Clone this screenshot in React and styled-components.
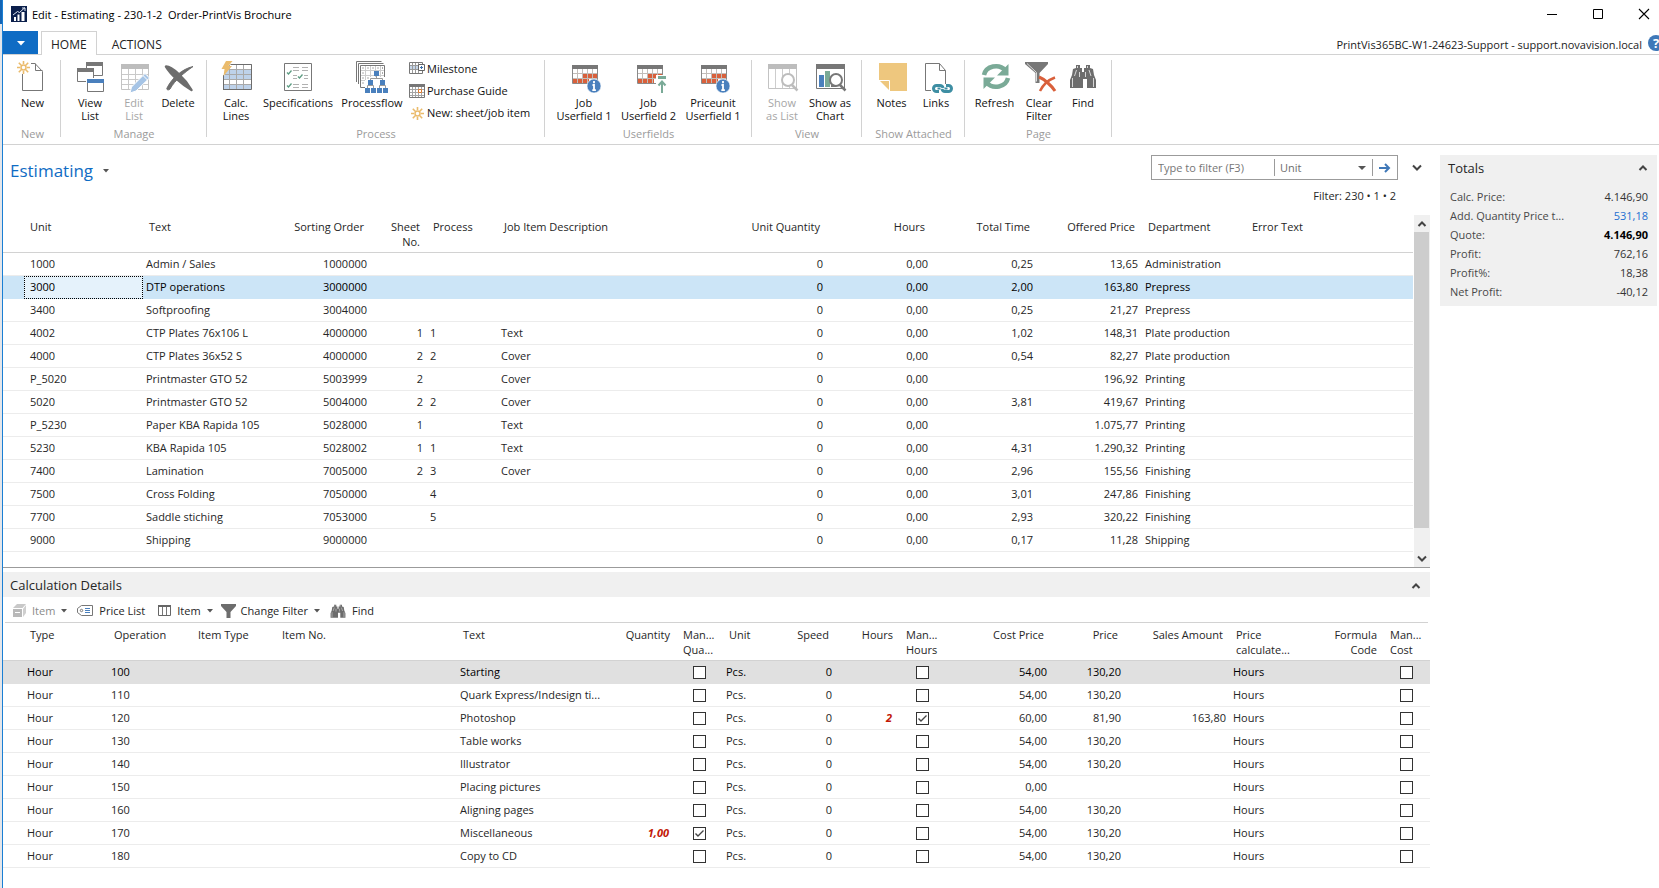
import React from 'react'
import styled, { createGlobalStyle } from 'styled-components'

const UNITS = [
  ['1000', 'Admin / Sales', '1000000', '', '', '', '0', '0,00', '0,25', '13,65', 'Administration', ''],
  ['3000', 'DTP operations', '3000000', '', '', '', '0', '0,00', '2,00', '163,80', 'Prepress', ''],
  ['3400', 'Softproofing', '3004000', '', '', '', '0', '0,00', '0,25', '21,27', 'Prepress', ''],
  ['4002', 'CTP Plates 76x106 L', '4000000', '1', '1', 'Text', '0', '0,00', '1,02', '148,31', 'Plate production', ''],
  ['4000', 'CTP Plates 36x52 S', '4000000', '2', '2', 'Cover', '0', '0,00', '0,54', '82,27', 'Plate production', ''],
  ['P_5020', 'Printmaster GTO 52', '5003999', '2', '', 'Cover', '0', '0,00', '', '196,92', 'Printing', ''],
  ['5020', 'Printmaster GTO 52', '5004000', '2', '2', 'Cover', '0', '0,00', '3,81', '419,67', 'Printing', ''],
  ['P_5230', 'Paper KBA Rapida 105', '5028000', '1', '', 'Text', '0', '0,00', '', '1.075,77', 'Printing', ''],
  ['5230', 'KBA Rapida 105', '5028002', '1', '1', 'Text', '0', '0,00', '4,31', '1.290,32', 'Printing', ''],
  ['7400', 'Lamination', '7005000', '2', '3', 'Cover', '0', '0,00', '2,96', '155,56', 'Finishing', ''],
  ['7500', 'Cross Folding', '7050000', '', '4', '', '0', '0,00', '3,01', '247,86', 'Finishing', ''],
  ['7700', 'Saddle stiching', '7053000', '', '5', '', '0', '0,00', '2,93', '320,22', 'Finishing', ''],
  ['9000', 'Shipping', '9000000', '', '', '', '0', '0,00', '0,17', '11,28', 'Shipping', ''],
]

const UNIT_COLUMNS = [
  { label: ['Unit'], width: 119 },
  { label: ['Text'], width: 123 },
  { label: ['Sorting Order'], width: 105, right: true },
  { label: ['Sheet', 'No.'], width: 56, right: true },
  { label: ['Process'], width: 71 },
  { label: ['Job Item Description'], width: 224 },
  { label: ['Unit Quantity'], width: 105, right: true },
  { label: ['Hours'], width: 105, right: true },
  { label: ['Total Time'], width: 105, right: true },
  { label: ['Offered Price'], width: 105, right: true },
  { label: ['Department'], width: 104 },
  { label: ['Error Text'] },
]

const DETAIL_COLUMNS = [
  { key: 'type', label: ['Type'], width: 84 },
  { key: 'operation', label: ['Operation'], width: 84 },
  { key: 'itemType', label: ['Item Type'], width: 84 },
  { key: 'itemNo', label: ['Item No.'], width: 181 },
  { key: 'text', label: ['Text'], width: 150 },
  { key: 'quantity', label: ['Quantity'], width: 70, right: true, manual: true },
  { key: 'manualQuantity', label: ['Man...', 'Qua...'], width: 46, check: true },
  { key: 'unit', label: ['Unit'], width: 49 },
  { key: 'speed', label: ['Speed'], width: 64, right: true },
  { key: 'hours', label: ['Hours'], width: 64, right: true, manual: true },
  { key: 'manualHours', label: ['Man...', 'Hours'], width: 46, check: true },
  { key: 'cost', label: ['Cost Price'], width: 105, right: true },
  { key: 'price', label: ['Price'], width: 74, right: true },
  { key: 'sales', label: ['Sales Amount'], width: 105, right: true },
  { key: 'method', label: ['Price', 'calculate...'], width: 84 },
  { key: 'formula', label: ['Formula', 'Code'], width: 70, right: true },
  { key: 'manualCost', label: ['Man...', 'Cost'], check: true },
]

const DETAILS = [
  { operation: '100', text: 'Starting', cost: '54,00', price: '130,20' },
  { operation: '110', text: 'Quark Express/Indesign ti...', cost: '54,00', price: '130,20' },
  { operation: '120', text: 'Photoshop', cost: '60,00', price: '81,90', sales: '163,80', hours: '2', manualHours: true },
  { operation: '130', text: 'Table works', cost: '54,00', price: '130,20' },
  { operation: '140', text: 'Illustrator', cost: '54,00', price: '130,20' },
  { operation: '150', text: 'Placing pictures', cost: '0,00' },
  { operation: '160', text: 'Aligning pages', cost: '54,00', price: '130,20' },
  { operation: '170', text: 'Miscellaneous', cost: '54,00', price: '130,20', quantity: '1,00', manualQuantity: true },
  { operation: '180', text: 'Copy to CD', cost: '54,00', price: '130,20' },
].map(row => ({ type: 'Hour', unit: 'Pcs.', speed: '0', method: 'Hours', ...row }))

const TOTALS = [
  { label: 'Calc. Price:', value: '4.146,90' },
  { label: 'Add. Quantity Price t...', value: '531,18', kind: 'link' },
  { label: 'Quote:', value: '4.146,90', kind: 'strong' },
  { label: 'Profit:', value: '762,16' },
  { label: 'Profit%:', value: '18,38' },
  { label: 'Net Profit:', value: '-40,12' },
]

/* icons */

const Icon = ({ size = 32, children }) => (
  <IconSvg width={size} height={size} viewBox={`0 0 ${size} ${size}`} fill="none" aria-hidden="true">
    {children}
  </IconSvg>
)

const Sun = ({ x = 0, y = 0 }) => (
  <g transform={`translate(${x} ${y})`} stroke="#eabb6c" strokeWidth="2">
    <circle cx="6.5" cy="6.5" r="2.5" strokeWidth="1.5" />
    <path d="M6.5 0v3M6.5 10v3M0 6.5h3M10 6.5h3M1.8 1.8l2.4 2.4M8.8 8.8l2.4 2.4M11.2 1.8L8.8 4.2M4.2 8.8l-2.4 2.4" strokeWidth="1.6" />
  </g>
)

const NewIcon = () => (
  <Icon>
    <path d="M5.500 14v16.500h20V11.500l-7.500-8h-4" stroke="#777" fill="#fff" />
    <path d="M18.500 3.500v7h7" stroke="#777" />
    <Sun x={0} y={1} />
  </Icon>
)

const ViewListIcon = () => (
  <Icon>
    <path d="M12.500 2.500h16v13h-16z" fill="#fff" stroke="#777" />
    <path d="M12 2h17v4H12z" fill="#777" />
    <path d="M3.500 8.500h16v13h-16z" fill="#fff" stroke="#777" />
    <path d="M3 8h17v4H3z" fill="#777" />
    <path d="M12.500 18.500h17v14h-17z" fill="#fff" stroke="#fff" />
    <path d="M13.500 19.500h16v12h-16z" fill="#fff" stroke="#777" />
    <path d="M13 19h17v4H13z" fill="#4a80bd" />
  </Icon>
)

const EditListIcon = () => (
  <Icon>
    <path d="M3.500 4.500h27v25h-27z" fill="#fff" stroke="#c3c3c3" />
    <path d="M3 4h28v5H3z" fill="#bdbdbd" />
    <path d="M10.500 9v20M17.500 9v20M24.500 9v20M4 14.500h26M4 19.500h26M4 24.500h26" stroke="#c9c9c9" />
    <path d="M12 33l1.500-6L27 13.500l4.500 4.500L18 31z" fill="#a6c4e5" stroke="#fff" />
    <path d="M25 15.500l4.500 4.500" stroke="#fff" />
  </Icon>
)

const DeleteIcon = () => (
  <Icon>
    <path d="M4 6.500C10 7 22 17 29.500 30 21 25 9 15 4 6.500z" fill="#6d6d6d" stroke="#6d6d6d" strokeWidth="2.500" strokeLinejoin="round" />
    <path d="M5 28C10 18 20 9 31 6.500 22 13 13 20 8 29c-1 1.500-4 1-3-1z" fill="#6d6d6d" stroke="#6d6d6d" strokeWidth="1" />
  </Icon>
)

const CalcLinesIcon = () => (
  <Icon>
    <path d="M3.500 4.500h28v25h-28z" fill="#fff" stroke="#6d6d6d" />
    <path d="M4 10h27v9H4zM4 24h27v5H4z" fill="#bed2ea" />
    <path d="M9.500 5v24M16.500 5v24M23.500 5v24M4 9.500h27M4 14.500h27M4 19.500h27M4 24.500h27" stroke="#a9a9a9" />
    <path d="M3 0h10v5H9l-5 11H0V0z" fill="#fff" />
    <path d="M10.500 4.500h21M3.500 15v15" stroke="#6d6d6d" />
    <path d="M6 1h6.500L8.500 6H12L3.500 16l1-7H1.500z" fill="#eabb6c" />
  </Icon>
)

const SpecificationsIcon = () => (
  <Icon>
    <path d="M2.500 3.500h27v27h-27z" fill="#fff" stroke="#777" />
    <path d="M11 7.500h6M11 10.500h6M20 7.500h6M20 10.500h6M11 15.500h4M11 18.500h4M22 15.500h4M22 18.500h4M11 24.500h6M11 27.500h6M20 24.500h6M20 27.500h6" stroke="#b1b1b1" />
    <path d="M5 12.500l1.500 1.500 3-3.500M16 16.500l1.500 1.500 3-3.500M5 25.500l1.500 1.500 3-3.500" stroke="#5c9c82" strokeWidth="1.300" />
  </Icon>
)

const ProcessflowIcon = () => (
  <Icon>
    <path d="M.5 22V1.500h25M2.500 24V3.500h25" stroke="#777" />
    <path d="M4.500 5.500h24v22h-24z" fill="#fff" stroke="#777" />
    <path d="M9.500 6v21M14.500 6v21M19.500 6v21M24.500 6v21M5 10.500h23M5 15.500h23M5 20.500h23" stroke="#cdcdcd" />
    <path d="M6.500 8h1M11.500 8h1M16.500 8h1M21.500 8h1M26 8h1M6.500 13h1M6.500 18h1M11.500 18h1M6.500 23h1M26 13h1" stroke="#555" />
    <path d="M13 17h16v3h3v13H9V20h4z" fill="#fff" />
    <path d="M20.500 15v3.500M14.500 21v-2.500h12V21M11.500 28v-2.500h6V28M23.500 28v-2.500h6V28M14.500 24v2M26.500 24v2" stroke="#9a9a9a" />
    <path d="M18 11h5v5h-5zM12 20h5v5h-5zM24 20h5v5h-5zM9 28h5v5H9zM15 28h5v5h-5zM21 28h5v5h-5zM27 28h5v5h-5z" fill="#4a80bd" />
  </Icon>
)

const MilestoneIcon = () => (
  <Icon size={16}>
    <path d="M.5 1.500h13v11H.5z" fill="#fff" stroke="#777" />
    <path d="M1 5h9v4H1z" fill="#c5d5e8" />
    <path d="M3.500 2v10M6.500 2v10M9.500 2v10M1 4.500h12M1 8.500h12" stroke="#9a9a9a" />
    <path d="M9.500 3.500h6v6h-6z" fill="#fff" stroke="#666" />
    <path d="M11 6.500h3M12.500 5v3" stroke="#3a6ea8" />
  </Icon>
)

const PurchaseIcon = () => (
  <Icon size={16}>
    <path d="M.5 1.500h15v13H.5z" fill="#fff" stroke="#777" />
    <path d="M3.500 4v10M6.500 4v10M9.500 4v10M12.500 4v10M1 6.500h14M1 9.500h14M1 12.500h14" stroke="#a5a5a5" />
    <path d="M0 1h16v3H0z" fill="#777" />
    <path d="M9.500 6.500h3v3h-3z" fill="#fff" stroke="#e07b2e" />
  </Icon>
)

const SunIcon = () => (
  <Icon size={16}>
    <Sun x={2} y={2} />
  </Icon>
)

const UserfieldIcon = ({ arrow }) => (
  <Icon>
    <path d="M4.500 5.500h25v18h-25z" fill="#fff" stroke="#8a8a8a" />
    <path d="M15 14h14v4.500H15zM5 18.500h16V23H5z" fill="#d9603b" />
    <path d="M9.500 9v14M14.500 9v14M19.500 9v14M24.500 9v14M5 13.500h24M5 18.500h24" stroke="#c2bdb9" />
    <path d="M4 5h26v4H4z" fill="#777" />
    {arrow ? (
      <g>
        <path d="M23 15h11v18H23z" fill="#fff" />
        <path d="M25 16h8v3h-8z" fill="#7aaa97" />
        <path d="M29 33V22M25.500 25.500l3.500-4 3.500 4" stroke="#7aaa97" strokeWidth="2" />
      </g>
    ) : (
      <g>
        <circle cx="26" cy="26" r="7" fill="#4a80bd" stroke="#fff" strokeWidth=".6" />
        <path d="M26 21v2.200M24.500 25H26v5M24.300 30.200h3.600" stroke="#fff" strokeWidth="1.800" />
      </g>
    )}
  </Icon>
)

const Magnifier = ({ color }) => (
  <g>
    <circle cx="22" cy="20" r="6" fill="#fff" stroke={color} strokeWidth="2" />
    <path d="M26 25l5.500 5.500" stroke={color} strokeWidth="2.500" />
  </g>
)

const ShowListIcon = () => (
  <Icon>
    <path d="M2.500 4.500h28v24h-28z" fill="#fff" stroke="#c3c3c3" />
    <path d="M2 4h29v5H2z" fill="#bdbdbd" />
    <path d="M9.500 9v19M16.500 9v19M23.500 9v19" stroke="#cdcdcd" />
    <Magnifier color="#bdbdbd" />
  </Icon>
)

const ShowChartIcon = () => (
  <Icon>
    <path d="M2.500 4.500h28v24h-28z" fill="#fff" stroke="#777" />
    <path d="M2 4h29v5H2z" fill="#777" />
    <path d="M5 15h5v12H5z" fill="#4a80bd" />
    <path d="M11 11h5v16h-5z" fill="#7aaa97" />
    <path d="M17 18h5v9h-5z" fill="#777" />
    <Magnifier color="#777" />
  </Icon>
)

const NotesIcon = () => (
  <Icon>
    <path d="M3 3h28v28H14L3 20z" fill="#eec77e" />
    <path d="M3 20.500h10.500V31" stroke="#fff" />
  </Icon>
)

const LinksIcon = () => (
  <Icon>
    <path d="M5.500 3.500h14l6 7v20h-20z" fill="#fff" stroke="#777" />
    <path d="M19.500 3.500v7h6" stroke="#777" />
    <path d="M11 24h22v10H11z" fill="#fff" />
    <g stroke="#3e8ea3" strokeWidth="3">
      <path d="M19 31.500h-2.500a3 3 0 0 1 0-6H20q2.500 0 3 2.500" />
      <path d="M26 25.500h2.500a3 3 0 0 1 0 6H25q-2.500 0-3-2.500" />
      <path d="M17.500 28.500h3M24.500 28.500h3" strokeWidth="2" />
    </g>
  </Icon>
)

const RefreshIcon = () => (
  <Icon>
    <path d="M5 15C7 6 20 3 26.500 10.500" stroke="#7aaa97" strokeWidth="4.500" />
    <path d="M29.500 4v11.500H18z" fill="#7aaa97" />
    <path d="M29 18C27 27 14 30 7.500 22.500" stroke="#7aaa97" strokeWidth="4.500" />
    <path d="M4.500 29V17.500H16z" fill="#7aaa97" />
  </Icon>
)

const ClearFilterIcon = () => (
  <Icon>
    <path d="M2 2h23v2l-8.500 9v10h-4V13L2 4z" fill="#777" />
    <path d="M4 3.500l9.500 9v9" stroke="#ddd" />
    <path d="M16 17c5 2 12 8 16 14" stroke="#d9603b" strokeWidth="3" />
    <path d="M17 31c3-6 8-11 15-13.500" stroke="#d9603b" strokeWidth="2.500" />
  </Icon>
)

const Binoculars = () => (
  <g>
    <path d="M9 5h4v3h2v4h2V8h2V5h4v3l3 1 1 6 2 5v8h-9v-9h-4v9H3v-8l2-5 1-6 3-1z" fill="#6d6d6d" />
    <path d="M10.500 6v2M20.500 6v2M5.500 18v9M26.500 18v9M9.500 10L7.500 16M22 10l2 6M12.500 12v5M18.500 12v5" stroke="#d6d6d6" />
  </g>
)

const FindIcon = () => (
  <Icon>
    <Binoculars />
  </Icon>
)

const SmallFindIcon = () => (
  <IconSvg width="16" height="16" viewBox="2 2 28 28" aria-hidden="true">
    <Binoculars />
  </IconSvg>
)

const BoxIcon = () => (
  <Icon size={16}>
    <path d="M1 5l4-4h9l-3.500 4z" fill="#c8c8c8" />
    <path d="M1 6h9v8H1z" fill="#b9b9b9" />
    <path d="M11 6l3-4v8l-3 4z" fill="#cfcfcf" />
    <path d="M3 9.500h5" stroke="#fff" />
  </Icon>
)

const TagIcon = () => (
  <Icon size={16}>
    <path d="M4.500 2.500h11v10h-11L.5 9.500v-4z" fill="#fff" stroke="#777" />
    <circle cx="4.500" cy="7.500" r="1.200" stroke="#777" />
    <path d="M8 5.500h5M8 7.500h5M8 9.500h5" stroke="#4a80bd" />
  </Icon>
)

const ColumnsIcon = () => (
  <Icon size={16}>
    <path d="M1.500 2.500h12v10h-12z" fill="#fff" stroke="#666" />
    <path d="M5.500 3v9M9.500 3v9" stroke="#777" />
    <path d="M1 2h13v2H1z" fill="#666" />
  </Icon>
)

const FunnelIcon = () => (
  <Icon size={16}>
    <path d="M0 1h15v2L9.500 9v6h-4V9L0 3z" fill="#6d6d6d" />
  </Icon>
)

const Chevron = ({ up }) => (
  <IconSvg width="10" height="8" viewBox="0 0 10 8" fill="none" aria-hidden="true">
    <path d={up ? 'M1.500 6L5 2.500 8.500 6' : 'M1 1.500L5 5.500 9 1.500'} stroke="#444" strokeWidth="2" />
  </IconSvg>
)

const Caret = () => (
  <IconSvg width="6" height="4" viewBox="0 0 6 4" aria-hidden="true">
    <path d="M0 0h6L3 3.500z" fill="#555" />
  </IconSvg>
)

const AppLogo = () => (
  <Icon size={16}>
    <path d="M0 0h16v16H0z" fill="#0b1f4b" />
    <path d="M3 11h2v4H3zM6.500 8.500h2V15h-2zM10.500 6h3v9h-3z" fill="#fff" />
    <path d="M2 9l4.500-3.500 2 1L14 1.500M11 2h3v3" stroke="#dfe6f2" />
  </Icon>
)

/* ribbon */

const RibbonButton = ({ icon, lines, width, disabled }) => (
  <BigButton type="button" $width={width} disabled={disabled}>
    {icon}
    <span>
      {lines.map(line => (
        <Line key={line}>{line}</Line>
      ))}
    </span>
  </BigButton>
)

const RibbonGroup = ({ title, children }) => (
  <Group aria-label={title}>
    <GroupButtons>{children}</GroupButtons>
    <GroupTitle>{title}</GroupTitle>
  </Group>
)

const Ribbon = () => (
  <RibbonBar>
    <RibbonGroup title="New">
      <RibbonButton icon={<NewIcon />} lines={['New']} width={45} />
    </RibbonGroup>
    <RibbonGroup title="Manage">
      <RibbonButton icon={<ViewListIcon />} lines={['View', 'List']} />
      <RibbonButton icon={<EditListIcon />} lines={['Edit', 'List']} disabled />
      <RibbonButton icon={<DeleteIcon />} lines={['Delete']} />
    </RibbonGroup>
    <RibbonGroup title="Process">
      <RibbonButton icon={<CalcLinesIcon />} lines={['Calc.', 'Lines']} />
      <RibbonButton icon={<SpecificationsIcon />} lines={['Specifications']} width={80} />
      <RibbonButton icon={<ProcessflowIcon />} lines={['Processflow']} width={68} />
      <SmallButtons>
        <SmallButton type="button"><MilestoneIcon />Milestone</SmallButton>
        <SmallButton type="button"><PurchaseIcon />Purchase Guide</SmallButton>
        <SmallButton type="button"><SunIcon />New: sheet/job item</SmallButton>
      </SmallButtons>
    </RibbonGroup>
    <RibbonGroup title="Userfields">
      <RibbonButton icon={<UserfieldIcon />} lines={['Job', 'Userfield 1']} width={64} />
      <RibbonButton icon={<UserfieldIcon arrow />} lines={['Job', 'Userfield 2']} width={65} />
      <RibbonButton icon={<UserfieldIcon />} lines={['Priceunit', 'Userfield 1']} width={64} />
    </RibbonGroup>
    <RibbonGroup title="View">
      <RibbonButton icon={<ShowListIcon />} lines={['Show', 'as List']} width={46} disabled />
      <RibbonButton icon={<ShowChartIcon />} lines={['Show as', 'Chart']} width={50} />
    </RibbonGroup>
    <RibbonGroup title="Show Attached">
      <RibbonButton icon={<NotesIcon />} lines={['Notes']} width={45} />
      <RibbonButton icon={<LinksIcon />} lines={['Links']} />
    </RibbonGroup>
    <RibbonGroup title="Page">
      <RibbonButton icon={<RefreshIcon />} lines={['Refresh']} width={45} />
      <RibbonButton icon={<ClearFilterIcon />} lines={['Clear', 'Filter']} />
      <RibbonButton icon={<FindIcon />} lines={['Find']} />
    </RibbonGroup>
  </RibbonBar>
)

/* tables */

const TableHead = ({ columns }) => (
  <>
    <colgroup>
      <col width="21" />
      {columns.map((column, i) => (
        <col key={i} width={column.width} />
      ))}
    </colgroup>
    <thead>
      <tr>
        <HeadCell />
        {columns.map((column, i) => (
          <HeadCell key={i} $right={column.right}>
            {column.label.map(line => (
              <Line key={line}>{line}</Line>
            ))}
          </HeadCell>
        ))}
      </tr>
    </thead>
  </>
)

const Tick = ({ label, checked }) => (
  <TickLabel>
    <TickInput type="checkbox" aria-label={label} defaultChecked={checked} />
    <TickMark viewBox="0 0 13 13" fill="none" aria-hidden="true">
      <path d="M2.500 6.500L5 9l5.500-5.500" stroke="#444" strokeWidth="1.400" />
    </TickMark>
  </TickLabel>
)

const UnitTable = () => (
  <GridTable>
    <TableHead columns={UNIT_COLUMNS} />
    <tbody>
      {UNITS.map((row, r) => (
        <Row key={r} $tone={r === 1 ? 'active' : null}>
          <Cell />
          {row.map((value, c) => (
            <Cell key={c} $right={UNIT_COLUMNS[c].right} $first={c === 0} $focused={r === 1 && c === 0}>
              {value}
            </Cell>
          ))}
        </Row>
      ))}
    </tbody>
  </GridTable>
)

const DetailTable = () => (
  <GridTable>
    <TableHead columns={DETAIL_COLUMNS} />
    <tbody>
      {DETAILS.map((row, r) => (
        <Row key={row.operation} $tone={r === 0 ? 'muted' : null}>
          <Cell />
          {DETAIL_COLUMNS.map(({ key, right, check, manual }) => (
            <Cell key={key} $right={right} $center={check} $manual={manual}>
              {check ? <Tick label={`${key} ${row.operation}`} checked={row[key]} /> : row[key]}
            </Cell>
          ))}
        </Row>
      ))}
    </tbody>
  </GridTable>
)

const App = () => (
  <Desktop>
    <GlobalStyle />
    <Window>
      <TitleBar>
        <AppLogo />
        <WindowTitle>{'Edit - Estimating - 230-1-2  Order-PrintVis Brochure'}</WindowTitle>
        <WindowButton type="button" aria-label="Minimize">
          <Icon size={12}><path d="M1 6.500h10" stroke="#000" /></Icon>
        </WindowButton>
        <WindowButton type="button" aria-label="Maximize">
          <Icon size={12}><path d="M1.500 1.500h9v9h-9z" stroke="#000" /></Icon>
        </WindowButton>
        <WindowButton type="button" aria-label="Close">
          <Icon size={12}><path d="M1 1l10 10M11 1L1 11" stroke="#000" strokeWidth="1.100" /></Icon>
        </WindowButton>
      </TitleBar>

      <TabBar>
        <FileButton type="button" aria-label="Application menu">
          <Icon size={8}><path d="M0 2h8L4 6.500z" fill="#fff" /></Icon>
        </FileButton>
        <Tab type="button" $active>HOME</Tab>
        <Tab type="button">ACTIONS</Tab>
        <Server>PrintVis365BC-W1-24623-Support - support.novavision.local</Server>
        <Help type="button" aria-label="Help">?</Help>
      </TabBar>

      <Ribbon />

      <Content>
        <Main>
          <PageHeader>
            <PageTitle type="button">
              Estimating
              <Caret />
            </PageTitle>
            <FilterBox>
              <FilterInput aria-label="Type to filter" placeholder="Type to filter (F3)" />
              <FilterField>
                <FilterSelect aria-label="Filter field" defaultValue="Unit">
                  <option>Unit</option>
                </FilterSelect>
                <Icon size={8}><path d="M0 2h8L4 6z" fill="#555" /></Icon>
              </FilterField>
              <FilterGo type="button" aria-label="Apply filter">
                <Icon size={12}>
                  <path d="M0 6h10M6 2l4 4-4 4" stroke="#3f78b8" strokeWidth="2" />
                </Icon>
              </FilterGo>
            </FilterBox>
            <PlainButton type="button" aria-label="Expand filter pane"><Chevron /></PlainButton>
          </PageHeader>
          <FilterText>Filter: 230 • 1 • 2</FilterText>

          <Lines>
            <UnitTable />
            <ScrollBar>
              <ScrollButton type="button" aria-label="Scroll up"><Chevron up /></ScrollButton>
              <ScrollThumb />
              <ScrollButton type="button" aria-label="Scroll down"><Chevron /></ScrollButton>
            </ScrollBar>
          </Lines>

          <PartHeader>
            <PartTitle>Calculation Details</PartTitle>
            <PlainButton type="button" aria-label="Collapse details"><Chevron up /></PlainButton>
          </PartHeader>
          <PartToolbar>
            <ToolButton type="button" disabled><BoxIcon />Item<Caret /></ToolButton>
            <ToolButton type="button" $plain><TagIcon />Price List</ToolButton>
            <ToolButton type="button"><ColumnsIcon />Item<Caret /></ToolButton>
            <ToolButton type="button"><FunnelIcon />Change Filter<Caret /></ToolButton>
            <ToolButton type="button" $plain><SmallFindIcon />Find</ToolButton>
          </PartToolbar>
          <DetailTable />
        </Main>

        <FactBox>
          <FactHeader>
            <PartTitle>Totals</PartTitle>
            <PlainButton type="button" aria-label="Collapse totals"><Chevron up /></PlainButton>
          </FactHeader>
          {TOTALS.map(({ label, value, kind }) => (
            <Fact key={label}>
              <span>{label}</span>
              {kind === 'link' ? <FactLink href="#">{value}</FactLink> : <FactValue $strong={kind === 'strong'}>{value}</FactValue>}
            </Fact>
          ))}
        </FactBox>
      </Content>
    </Window>
  </Desktop>
)

const GlobalStyle = createGlobalStyle`
  * {
    box-sizing: border-box;
  }

  body {
    margin: 0;
    overflow: hidden;
    background-color: #fff;
    color: #262626;
    font-family: 'Segoe UI', 'Open Sans', 'Noto Sans', sans-serif;
    font-size: 11px;
    line-height: 15px;
  }

  button, input, select {
    margin: 0;
    padding: 0;
    border: 0;
    background: none;
    color: inherit;
    font: inherit;
  }
`

const Desktop = styled.div`
  min-height: 100vh;
  padding-left: 2px;
  background: linear-gradient(#1464b4 24px, #e4e6ea 24px);
`

const Window = styled.div`
  min-height: 100vh;
  border-left: 1px solid #1a7fd4;
  background-color: #fff;
  overflow: hidden;
`

const IconSvg = styled.svg`
  display: block;
  flex: none;
  overflow: visible;
`

const Line = styled.span`
  display: block;
`

const TitleBar = styled.header`
  display: flex;
  align-items: center;
  height: 31px;
  margin-right: -8px;
  padding: 0 0 3px 8px;
`

const WindowTitle = styled.h1`
  flex: 1;
  margin: 0 0 0 5px;
  color: #000;
  font-size: 11px;
  font-weight: normal;
  white-space: pre;
`

const WindowButton = styled.button`
  display: flex;
  justify-content: center;
  width: 46px;
`

const TabBar = styled.nav`
  display: flex;
  align-items: stretch;
  height: 24px;
  margin-right: -5px;
  border-bottom: 1px solid #d2d2d2;
  color: #222;
`

const FileButton = styled.button`
  display: flex;
  align-items: center;
  justify-content: center;
  width: 35px;
  margin-right: 3px;
  background-color: #0f6cc4;
`

const Tab = styled.button`
  margin-bottom: -1px;
  padding: 2px ${({ $active }) => ($active ? 9 : 14)}px 0;
  border: 1px solid ${({ $active }) => ($active ? '#d2d2d2' : 'transparent')};
  border-bottom: 0;
  background-color: ${({ $active }) => ($active ? '#fff' : 'transparent')};
  font-size: 12px;
`

const Server = styled.span`
  margin-left: auto;
  padding: 6px 6px 0 0;
`

const Help = styled.button`
  width: 16px;
  height: 16px;
  margin-top: 4px;
  border-radius: 50%;
  background-color: #3f78b8;
  color: #fff;
  font-size: 13px;
  font-weight: bold;
`

const RibbonBar = styled.div`
  display: flex;
  height: 90px;
  padding: 5px 0 7px;
  border-bottom: 1px solid #d2d2d2;
`

const Group = styled.section`
  display: flex;
  flex-direction: column;
  justify-content: space-between;
  padding: 0 6px 0 7px;
  border-right: 1px solid #d2d2d2;

  &:first-child {
    padding-right: 5px;
  }
`

const GroupButtons = styled.div`
  display: flex;
  align-items: flex-start;
`

const GroupTitle = styled.div`
  margin-bottom: -3px;
  color: #9b9b9b;
  line-height: 13px;
  text-align: center;
  white-space: nowrap;
`

const BigButton = styled.button`
  display: flex;
  flex-direction: column;
  align-items: center;
  gap: 4px;
  width: ${({ $width }) => $width || 44}px;
  color: ${({ disabled }) => (disabled ? '#a6a6a6' : '#111')};
  line-height: 13px;
  white-space: nowrap;
`

const SmallButtons = styled.div`
  display: flex;
  flex-direction: column;
  width: 132px;
  padding-left: 3px;
`

const SmallButton = styled.button`
  display: flex;
  align-items: center;
  gap: 2px;
  height: 22px;
  padding-bottom: 5px;
  color: #111;
  white-space: nowrap;
`

const Content = styled.main`
  display: flex;
  align-items: flex-start;
  gap: 10px;
  padding: 10px 2px 0 0;
`

const Main = styled.div`
  flex: 1;
  min-width: 0;
`

const PageHeader = styled.div`
  display: flex;
  align-items: center;
  gap: 13px;
  height: 25px;
  padding-right: 7px;
`

const PageTitle = styled.button`
  display: flex;
  align-items: center;
  gap: 10px;
  margin-right: auto;
  padding: 6px 0 0 7px;
  color: #0f6cc4;
  font-size: 17px;
  line-height: 21px;
`

const FilterBox = styled.div`
  display: flex;
  align-items: center;
  width: 247px;
  height: 25px;
  border: 1px solid #9b9b9b;
  color: #6d6d6d;
`

const FilterInput = styled.input`
  flex: 1;
  min-width: 0;
  height: 17px;
  padding-left: 6px;
  outline: none;

  &::placeholder {
    color: #767676;
    opacity: 1;
  }
`

const FilterField = styled.div`
  display: flex;
  align-items: center;
  width: 99px;
  height: 17px;
  padding: 0 6px 0 5px;
  border: solid #9b9b9b;
  border-width: 0 1px;
`

const FilterSelect = styled.select`
  flex: 1;
  appearance: none;
  outline: none;
`

const FilterGo = styled.button`
  display: flex;
  justify-content: center;
  width: 24px;
`

const PlainButton = styled.button`
  display: flex;
  align-items: center;
  justify-content: center;
  width: 12px;
  height: 16px;
`

const FilterText = styled.div`
  padding: 8px 34px 0 0;
  text-align: right;
`

const Lines = styled.div`
  display: flex;
  align-items: flex-start;
  gap: 1px;
  height: 365px;
  padding-top: 12px;
  border-bottom: 1px solid #9b9b9b;
`

const GridTable = styled.table`
  width: 100%;
  border-collapse: separate;
  border-spacing: 0;
  table-layout: fixed;
`

const HeadCell = styled.th`
  height: 38px;
  padding: 4px 7px 3px 6px;
  border-bottom: 1px solid #d2d2d2;
  font-weight: normal;
  text-align: ${({ $right }) => ($right ? 'right' : 'left')};
  vertical-align: top;
  white-space: nowrap;
`

const Cell = styled.td`
  height: 23px;
  padding: 0 4px 2px ${({ $first }) => ($first ? 6 : 3)}px;
  border-bottom: 1px solid #ececec;
  overflow: hidden;
  white-space: nowrap;
  text-align: ${({ $right, $center }) => {
    if ($center) return 'center'
    return $right ? 'right' : 'left'
  }};
  ${({ $manual }) => $manual && `
    padding-right: 8px;
    color: #c21807;
    font-weight: bold;
    font-style: italic;
  `}
  ${({ $focused }) => $focused && `
    outline: 1px dotted #000;
    outline-offset: -1px;
    background-color: #e5f2fb;
  `}
`

const ROW_TONES = {
  active: '#cce5f7',
  muted: '#e0e0e0',
}

const Row = styled.tr`
  ${({ $tone }) => $tone && `
    background-color: ${ROW_TONES[$tone]};
    color: #000;

    & > td {
      border-bottom-color: ${ROW_TONES[$tone]};
    }
  `}
`

const TickLabel = styled.label`
  position: relative;
  display: inline-block;
  width: 13px;
  height: 13px;
  vertical-align: middle;
`

const TickInput = styled.input`
  display: block;
  appearance: none;
  width: 13px;
  height: 13px;
  border: 1px solid #333;
  background-color: #fff;
`

const TickMark = styled.svg`
  position: absolute;
  top: 0;
  left: 0;
  width: 13px;
  height: 13px;
  visibility: hidden;
  pointer-events: none;

  ${TickInput}:checked + & {
    visibility: visible;
  }
`

const ScrollBar = styled.div`
  display: flex;
  flex: none;
  flex-direction: column;
  align-self: stretch;
  width: 16px;
  background-color: #f0f0f0;
`

const ScrollButton = styled.button`
  display: flex;
  align-items: center;
  justify-content: center;
  height: 17px;

  &:last-child {
    margin-top: auto;
  }
`

const ScrollThumb = styled.div`
  height: 84%;
  margin-right: 1px;
  background-color: #cdcdcd;
`

const PartHeader = styled.div`
  display: flex;
  align-items: center;
  justify-content: space-between;
  height: 25px;
  margin-top: 4px;
  padding: 2px 8px 0 7px;
  background-color: #f0f0f0;
`

const PartTitle = styled.h2`
  margin: 0;
  color: #262626;
  font-size: 13px;
  font-weight: normal;
`

const PartToolbar = styled.div`
  display: flex;
  align-items: center;
  gap: 6px;
  height: 26px;
  margin: 0 2px;
  padding: 2px 0 0 7px;
  border-bottom: 1px solid #d2d2d2;
`

const ToolButton = styled.button`
  display: flex;
  align-items: center;
  gap: 4px;
  padding-right: ${({ $plain }) => ($plain ? 6 : 0)}px;
  color: ${({ disabled }) => (disabled ? '#8a8a8a' : '#262626')};
  white-space: nowrap;

  ${IconSvg}:last-child {
    margin: 0 2px;
  }
`

const FactBox = styled.aside`
  flex: none;
  width: 217px;
  padding: 0 9px 5px 10px;
  background-color: #f0f0f0;
`

const FactHeader = styled.div`
  display: flex;
  align-items: center;
  justify-content: space-between;
  height: 26px;
  margin: 0 -1px 6px -2px;
`

const Fact = styled.div`
  display: flex;
  justify-content: space-between;
  line-height: 19px;
  color: #484848;
`

const FactValue = styled.span`
  color: ${({ $strong }) => ($strong ? '#000' : '#333')};
  font-weight: ${({ $strong }) => ($strong ? 'bold' : 'normal')};
`

const FactLink = styled.a`
  color: #1d6fd1;
  text-decoration: none;
`

export default App
